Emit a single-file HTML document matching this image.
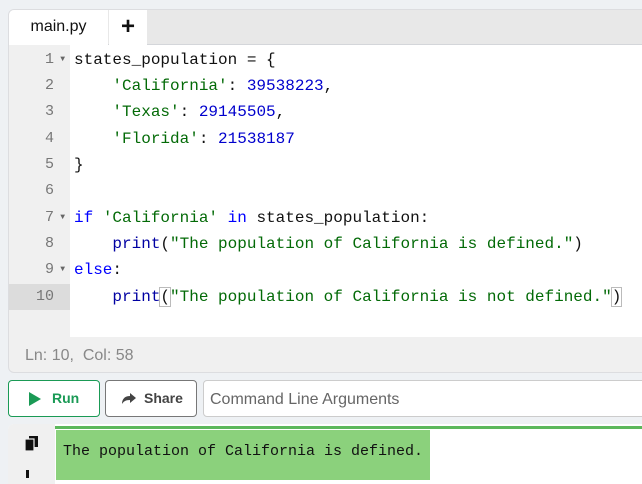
<!DOCTYPE html>
<html><head><style>
*{margin:0;padding:0;box-sizing:border-box}
body{width:642px;height:476px;overflow:hidden;background:#eef1f4;font-family:"Liberation Sans",sans-serif;position:relative}
.card{position:absolute;left:8px;top:9px;width:640px;height:364px;background:#f0f0f0;border-radius:6px;overflow:hidden;border:1px solid #dcdde0}
.tabs{position:absolute;left:0;top:0;width:100%;height:35px;background:#e8e8e8;border-bottom:1px solid #d4d6da}
.tab{position:absolute;top:0;height:35px;background:#fff;font-size:16px;color:#111;text-align:center;line-height:34px}
.gutter{position:absolute;left:0;top:35px;width:61px;height:292px;background:#f0f0f0}
.code{position:absolute;left:61px;top:35px;right:0;height:292px;background:#fff}
.ln{position:absolute;left:0;width:61px;height:26px;font:15px "Liberation Mono",monospace;color:#777;line-height:26px}
.ln span.n{position:absolute;right:16px}
.ln span.f{position:absolute;right:5px;font-size:8px;color:#666}
.cl{position:absolute;left:4px;font:16px "Liberation Mono",monospace;line-height:26px;white-space:pre;color:#111}
.s{color:#036a07}.num{color:#0000cd}.k{color:#0000ff}.b{color:#0000a2}
.status{position:absolute;left:0;top:327px;width:100%;height:37px;color:#888;font-size:16px;line-height:37px;padding-left:16px}
.btn{position:absolute;top:380px;height:37px;border-radius:4px;background:#fff;font-weight:bold;font-size:14px;line-height:35px}
</style></head><body>
<div class="card">
 <div class="tabs">
  <div class="tab" style="left:0;width:99px">main.py</div>
  <div class="tab" style="left:100px;width:38px;font-size:24px;font-weight:bold;line-height:33px">+</div>
 </div>
 <div class="gutter">
  <div class="ln" style="top:2px"><span class="n">1</span><span class="f">▼</span></div>
  <div class="ln" style="top:28px"><span class="n">2</span></div>
  <div class="ln" style="top:54px"><span class="n">3</span></div>
  <div class="ln" style="top:81px"><span class="n">4</span></div>
  <div class="ln" style="top:107px"><span class="n">5</span></div>
  <div class="ln" style="top:133px"><span class="n">6</span></div>
  <div class="ln" style="top:160px"><span class="n">7</span><span class="f">▼</span></div>
  <div class="ln" style="top:186px"><span class="n">8</span></div>
  <div class="ln" style="top:212px"><span class="n">9</span><span class="f">▼</span></div>
  <div class="ln" style="top:239px;background:#dcdcdc"><span class="n">10</span></div>
 </div>
 <div class="code">
  <div class="cl" style="top:2px">states_population = {</div>
  <div class="cl" style="top:28px">    <span class="s">'California'</span>: <span class="num">39538223</span>,</div>
  <div class="cl" style="top:54px">    <span class="s">'Texas'</span>: <span class="num">29145505</span>,</div>
  <div class="cl" style="top:81px">    <span class="s">'Florida'</span>: <span class="num">21538187</span></div>
  <div class="cl" style="top:107px">}</div>
  <div class="cl" style="top:160px"><span class="k">if</span> <span class="s">'California'</span> <span class="k">in</span> states_population:</div>
  <div class="cl" style="top:186px">    <span class="b">print</span>(<span class="s">"The population of California is defined."</span>)</div>
  <div class="cl" style="top:212px"><span class="k">else</span>:</div>
  <div class="cl" style="top:239px">    <span class="b">print</span><span style="outline:1px solid #bbb">(</span><span class="s">"The population of California is not defined."</span><span style="outline:1px solid #bbb">)</span><span style="border-left:1px solid #111"></span></div>
 </div>
 <div class="status">Ln: 10,&nbsp; Col: 58</div>
</div>
<div class="btn" style="left:8px;width:92px;border:1px solid #1a9a55;color:#1a9a55"><span style="position:absolute;left:20px;top:11px;width:0;height:0;border-left:12px solid #1a9a55;border-top:7px solid transparent;border-bottom:7px solid transparent"></span><span style="position:absolute;left:43px">Run</span></div>
<div class="btn" style="left:105px;width:92px;border:1px solid #777;color:#444"><svg style="position:absolute;left:15px;top:11px" width="16" height="14" viewBox="0 0 16 14"><path d="M9 1 L15 6 L9 11 V8 C5 8 3 9 1 12 C1 7 4 4 9 4 Z" fill="#444"/></svg><span style="position:absolute;left:38px">Share</span></div>
<div class="btn" style="left:203px;width:445px;border:1px solid #ccc;color:#666;font-weight:normal;font-size:16px;padding-left:6px;line-height:37px">Command Line Arguments</div>
<div style="position:absolute;left:8px;top:424px;width:640px;height:60px;background:#fff;border-radius:6px 0 0 0;overflow:hidden">
 <div style="position:absolute;left:0;top:0;width:47px;height:60px;background:#f0f0f0"></div>
 <div style="position:absolute;left:47px;top:2px;right:0;height:3px;background:#5cb85c"></div>
 <svg style="position:absolute;left:17px;top:12px" width="13" height="15" viewBox="0 0 13 15"><rect x="4" y="0" width="9" height="11" fill="#111"/><rect x="0" y="3" width="9" height="12" fill="#111" stroke="#f0f0f0" stroke-width="1.2"/></svg>
 <div style="position:absolute;left:18px;top:46px;width:3px;height:8px;background:#111"></div>
 <div style="position:absolute;left:48px;top:6px;width:374px;height:50px;background:#8bd17c;font:15px 'Liberation Mono',monospace;color:#111;padding:13px 0 0 7px">The population of California is defined.</div>
</div>
</body></html>
